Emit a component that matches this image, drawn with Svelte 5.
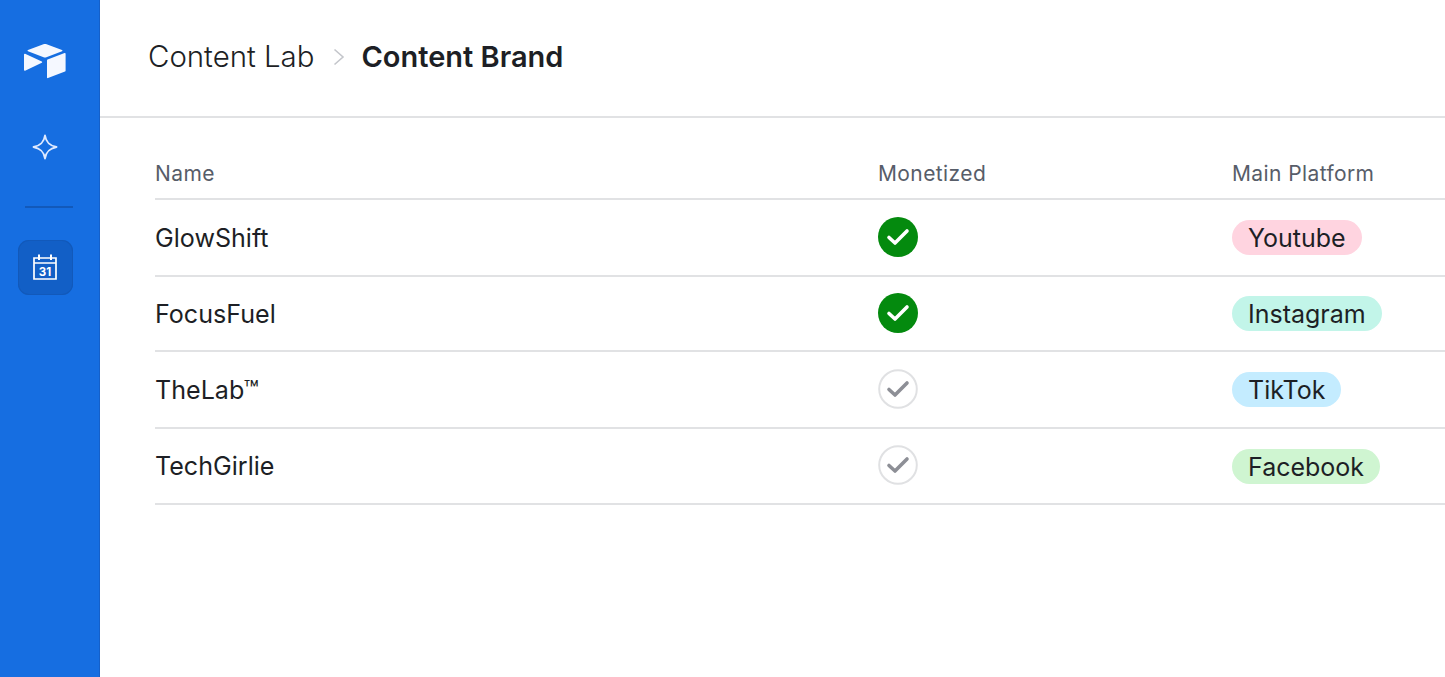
<script>
  const rows = [
    { name: "GlowShift", paid: true, platform: "Youtube", tone: "pink" },
    { name: "FocusFuel", paid: true, platform: "Instagram", tone: "teal" },
    { name: "TheLab™", paid: false, platform: "TikTok", tone: "blue" },
    { name: "TechGirlie", paid: false, platform: "Facebook", tone: "green" }
  ];
</script>

<div class="app">
  <nav class="rail">
    <svg class="logo" width="44" height="38" viewBox="0 0 44 38">
      <path fill="#f5f8ff" d="M20.400 3.200 5 8.900c-.6.200-.6 1 0 1.300l15.600 6.100c.9.400 1.900.4 2.800 0l15.600-6.100c.6-.3.6-1.100 0-1.300L23.600 3.200c-1-.4-2.200-.4-3.200 0z" />
      <path fill="#f5f8ff" d="M24 19.500v17c0 .5.500.8 1 .6l17-6.500c.4-.1.600-.5.600-.9v-17c0-.5-.5-.8-1-.6l-17 6.500c-.4.100-.6.500-.6.900z" />
      <path fill="#f5f8ff" d="M1 13.500v15.600c0 .6.600.9 1.100.7l16.700-8.100c.5-.3.500-1 0-1.200L2.100 12.700c-.5-.2-1.100.2-1.100.8z" />
    </svg>
    <svg class="spark" width="26" height="26" viewBox="0 0 26 26">
      <path fill="none" stroke="#dfeaff" stroke-width="1.800" stroke-linejoin="round" d="M13 1.500c1 6.500 4 9.800 11.500 11.500C17 14.700 14 18 13 24.500 12 18 9 14.700 1.500 13 9 11.300 12 8 13 1.500z" />
    </svg>
    <div class="rule"></div>
    <div class="active">
      <svg width="26" height="28" viewBox="0 0 26 28">
        <path fill="none" stroke="#fff" stroke-width="1.700" d="M2 5h22v21H2zM2 10h22" />
        <path stroke="#fff" stroke-width="2" d="M7 1.500V7M19 1.500V7" />
        <text x="13" y="23" class="day">31</text>
      </svg>
    </div>
  </nav>

  <main>
    <header>
      <span class="crumb">Content Lab</span>
      <svg class="chev" width="12" height="18" viewBox="0 0 12 18">
        <path fill="none" stroke="#c4c6cb" stroke-width="1.600" d="M1.500 1.500 10 9l-8.500 7.500" />
      </svg>
      <span class="crumb current">Content Brand</span>
    </header>

    <section class="table">
      <div class="row head">
        <span>Name</span>
        <span>Monetized</span>
        <span>Main Platform</span>
      </div>
      {#each rows as row}
        <div class="row">
          <span class="name">{row.name}</span>
          <span class="cell">
            {#if row.paid}
              <svg width="40" height="40" viewBox="0 0 40 40">
                <circle cx="20" cy="20" r="20" fill="#048a0e" />
                <path fill="none" stroke="#fff" stroke-width="3.600" stroke-linecap="round" stroke-linejoin="round" d="M11 20.500l6 5.500 12-12" />
              </svg>
            {:else}
              <svg width="40" height="40" viewBox="0 0 40 40">
                <circle cx="20" cy="20" r="18.800" fill="#fff" stroke="#e0e1e3" stroke-width="2" />
                <path fill="none" stroke="#8d8f96" stroke-width="3.600" stroke-linecap="round" stroke-linejoin="round" d="M11 20.500l6 5.500 12-12" />
              </svg>
            {/if}
          </span>
          <span class="cell"><span class="tag {row.tone}">{row.platform}</span></span>
        </div>
      {/each}
    </section>
  </main>
</div>

<style>
  :global(body) {
    overflow: hidden;
    background: #fff;
  }

  .app {
    display: flex;
    height: 677px;
    font-family: Inter, "Liberation Sans", sans-serif;
    color: #1d1f25;
  }

  .rail {
    flex: none;
    box-sizing: border-box;
    width: 100px;
    border-right: 1px solid #1560c9;
    background: #166ee1;
    display: flex;
    flex-direction: column;
    align-items: center;
    padding: 41px 9px 0 0;
  }

  .spark {
    margin-top: 55px;
  }

  .rule {
    width: 48px;
    height: 2px;
    margin: 46px 0 0 8px;
    background: #1259ba;
  }

  .active {
    width: 55px;
    height: 55px;
    margin: 32px 0 0 1px;
    border-radius: 11px;
    background: #125fc6;
    box-shadow: inset 0 0 0 1px #1259ba;
    display: flex;
    align-items: center;
    justify-content: center;
  }

  .active svg {
    margin: -1px 0 0 -2px;
  }

  .day {
    font-size: 11.500px;
    font-weight: 700;
    fill: #fff;
    text-anchor: middle;
  }

  main {
    flex: 1;
    min-width: 0;
  }

  header {
    box-sizing: border-box;
    height: 118px;
    border-bottom: 2px solid #e1e2e4;
    padding: 0 0 4px 48px;
    display: flex;
    align-items: center;
  }

  .crumb {
    font-size: 29.400px;
    font-weight: 300;
  }

  .current {
    font-size: 29px;
    font-weight: 600;
  }

  .chev {
    margin: 2px 16px 0 19px;
  }

  .table {
    margin-left: 55px;
    width: 1290px;
  }

  .row {
    display: grid;
    grid-template-columns: 723px 354px 1fr;
    align-items: center;
    height: 77px;
    border-bottom: 2px solid #e1e2e4;
    box-sizing: border-box;
    font-size: 25px;
  }

  .row:nth-child(3) {
    height: 75px;
  }

  .row:nth-child(5) {
    height: 76px;
  }

  .name {
    font-size: 25.100px;
  }

  .row.head {
    height: 82px;
    padding-top: 31px;
    font-size: 21px;
    letter-spacing: 0.4px;
    color: #575d69;
  }

  .cell {
    display: flex;
    align-items: center;
  }

  .cell svg {
    margin-top: -2px;
  }

  .tag {
    height: 35px;
    line-height: 36px;
    padding: 0 16px;
    border-radius: 18px;
  }

  .pink { background: #ffd4e0; }
  .teal { background: #c2f5e9; }
  .blue { background: #c4ecff; }
  .green { background: #cff5d1; }
</style>
